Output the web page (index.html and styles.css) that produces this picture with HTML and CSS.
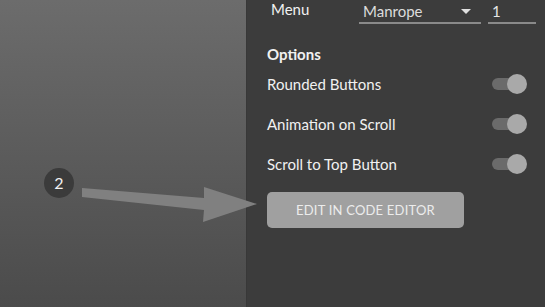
FILE: index.html
```html
<!DOCTYPE html>
<html lang="en">
<head>
  <meta charset="UTF-8" />
  <meta name="viewport" content="width=device-width, initial-scale=1.0"/>
  <title>Theme Options</title>
  <link rel="stylesheet" href="styles.css">
</head>
<body>
  <div class="stage">
    <div class="step-badge">2</div>
    <svg class="step-arrow" width="260" height="60" viewBox="0 0 260 60">
      <polygon points="82,7 204,17 204,6 257,23 203,41 204,29 82,16" fill="#808080"/>
    </svg>
  </div>

  <aside class="panel">
    <div class="menu-row">
      <span class="menu-label">Menu</span>
      <div class="font-select">
        <span>Manrope</span>
        <span class="caret"></span>
      </div>
      <div class="weight-input">1</div>
    </div>

    <h2 class="options-title">Options</h2>

    <div class="option-row">
      <span>Rounded Buttons</span>
      <span class="toggle on"></span>
    </div>
    <div class="option-row">
      <span>Animation on Scroll</span>
      <span class="toggle on"></span>
    </div>
    <div class="option-row">
      <span>Scroll to Top Button</span>
      <span class="toggle on"></span>
    </div>

    <button class="edit-button">Edit in Code Editor</button>
  </aside>
</body>
</html>
```

FILE: styles.css
```css
html, body {
  height: 100%;
}
body {
  margin: 0;
  display: grid;
  grid-template-columns: 247px minmax(0, 1fr);
  font-family: "Lato", "Open Sans", sans-serif;
  background: #3c3c3c;
  overflow: hidden;
}
.stage {
  position: relative;
  background: linear-gradient(to bottom, #6c6c6c, #4b4b4b);
  border-right: 1px solid #383838;
}
.step-badge {
  position: absolute;
  left: 44px;
  top: 168px;
  width: 30px;
  height: 30px;
  border-radius: 50%;
  background: #3b3b3b;
  color: #f2f2f2;
  font-size: 16px;
  line-height: 30px;
  text-align: center;
}
.step-arrow {
  position: absolute;
  left: 0;
  top: 181px;
  z-index: 2;
  overflow: visible;
}
.panel {
  padding: 0 18px 0 20px;
  color: #f1f1f1;
  font-size: 15px;
}
.menu-row {
  display: flex;
  align-items: flex-end;
  height: 24px;
  margin-right: -9px;
}
.menu-label {
  width: 92px;
  flex: none;
  padding-left: 4px;
  box-sizing: border-box;
  line-height: 20px;
  margin-bottom: 5px;
}
.font-select {
  width: 122px;
  flex: none;
  display: flex;
  align-items: center;
  justify-content: space-between;
  box-sizing: border-box;
  padding: 0 10px 0 4px;
  line-height: 22px;
  color: #dcdcdc;
  border-bottom: 2px solid #8a8a8a;
}
.caret {
  width: 0;
  height: 0;
  border-left: 5px solid transparent;
  border-right: 5px solid transparent;
  border-top: 5px solid #e0e0e0;
}
.weight-input {
  width: 48px;
  flex: none;
  margin-left: 7px;
  box-sizing: border-box;
  padding-left: 4px;
  line-height: 22px;
  color: #e6e6e6;
  border-bottom: 2px solid #8a8a8a;
}
.options-title {
  margin: 20px 0 0;
  font-size: 15px;
  font-weight: 700;
  line-height: 20px;
}
.option-row {
  display: flex;
  align-items: center;
  justify-content: space-between;
  height: 40px;
}
.toggle {
  position: relative;
  width: 35px;
  height: 20px;
}
.toggle::before {
  content: "";
  position: absolute;
  left: 0;
  top: 4px;
  width: 28px;
  height: 12px;
  border-radius: 6px;
  background: #6b6b6b;
}
.toggle::after {
  content: "";
  position: absolute;
  right: 0;
  top: 0;
  width: 20px;
  height: 20px;
  border-radius: 50%;
  background: #a9a9a9;
}
.edit-button {
  margin-top: 8px;
  width: 197px;
  height: 36px;
  border: none;
  border-radius: 5px;
  background: #a0a0a0;
  color: #ececec;
  font-family: inherit;
  font-size: 13px;
  text-transform: uppercase;
  letter-spacing: 0.2px;
}
```
